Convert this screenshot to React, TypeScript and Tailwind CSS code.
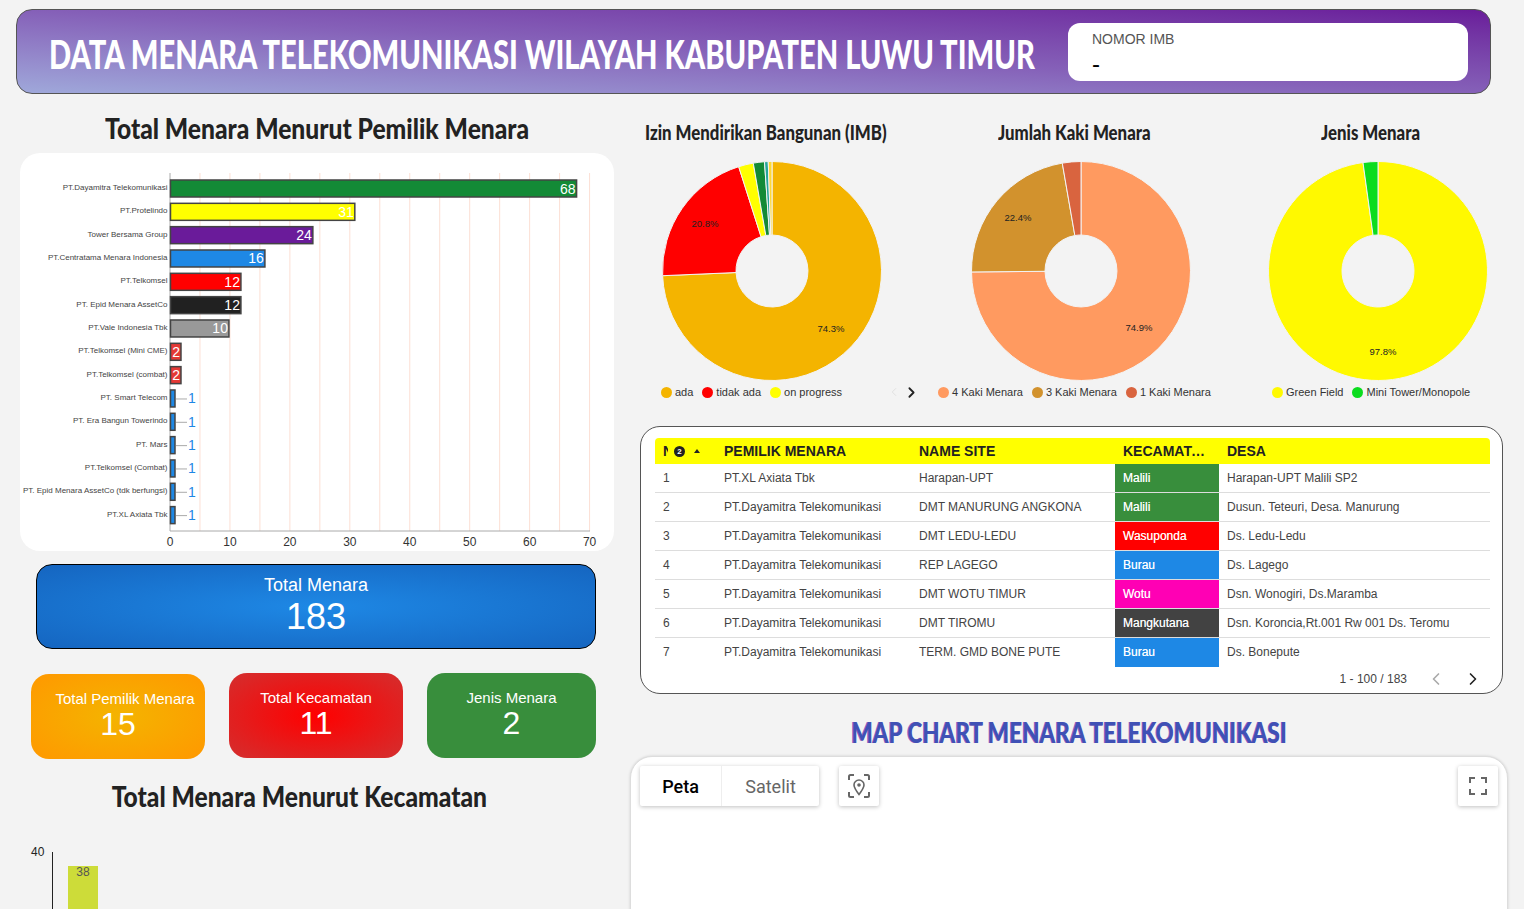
import { ChevronLeft, ChevronRight } from "lucide-react";

const heading = "font-['Lato',sans-serif] font-black text-[#222] whitespace-nowrap";

const bars = [
  { name: "PT.Dayamitra Telekomunikasi", value: 68, color: "#138a36" },
  { name: "PT.Protelindo", value: 31, color: "#ffff00" },
  { name: "Tower Bersama Group", value: 24, color: "#6a1b9a" },
  { name: "PT.Centratama Menara Indonesia", value: 16, color: "#1e88e5" },
  { name: "PT.Telkomsel", value: 12, color: "#ff0000" },
  { name: "PT. Epid Menara AssetCo", value: 12, color: "#212121" },
  { name: "PT.Vale Indonesia Tbk", value: 10, color: "#999999" },
  { name: "PT.Telkomsel (Mini CME)", value: 2, color: "#e53935" },
  { name: "PT.Telkomsel (combat)", value: 2, color: "#e53935" },
  { name: "PT. Smart Telecom", value: 1, color: "#1e88e5" },
  { name: "PT. Era Bangun Towerindo", value: 1, color: "#1e88e5" },
  { name: "PT. Mars", value: 1, color: "#1e88e5" },
  { name: "PT.Telkomsel (Combat)", value: 1, color: "#1e88e5" },
  { name: "PT. Epid Menara AssetCo (tdk berfungsi)", value: 1, color: "#1e88e5" },
  { name: "PT.XL Axiata Tbk", value: 1, color: "#1e88e5" },
];

const rows = [
  ["1", "PT.XL Axiata Tbk", "Harapan-UPT", "Malili", "Harapan-UPT Malili SP2", "bg-[#388e3c]"],
  ["2", "PT.Dayamitra Telekomunikasi", "DMT MANURUNG ANGKONA", "Malili", "Dusun. Teteuri, Desa. Manurung", "bg-[#388e3c]"],
  ["3", "PT.Dayamitra Telekomunikasi", "DMT LEDU-LEDU", "Wasuponda", "Ds. Ledu-Ledu", "bg-[#ff0000]"],
  ["4", "PT.Dayamitra Telekomunikasi", "REP LAGEGO", "Burau", "Ds. Lagego", "bg-[#1e88e5]"],
  ["5", "PT.Dayamitra Telekomunikasi", "DMT WOTU TIMUR", "Wotu", "Dsn. Wonogiri, Ds.Maramba", "bg-[#ff00b4]"],
  ["6", "PT.Dayamitra Telekomunikasi", "DMT TIROMU", "Mangkutana", "Dsn. Koroncia,Rt.001 Rw 001 Ds. Teromu", "bg-[#424242]"],
  ["7", "PT.Dayamitra Telekomunikasi", "TERM. GMD BONE PUTE", "Burau", "Ds. Bonepute", "bg-[#1e88e5]"],
];

const BarChart = () => (
  <svg width="594" height="398" className="block">
    {Array.from({ length: 14 }, (_, i) => (
      <line key={i} x1={150 + (i + 1) * 29.97} x2={150 + (i + 1) * 29.97} y1="20" y2="378" stroke="#fcdfd4" />
    ))}
    <line x1="150" x2="150" y1="20" y2="378" stroke="#aaa" />
    <line x1="150" x2="570" y1="378" y2="378" stroke="#aaa" />
    {[0, 10, 20, 30, 40, 50, 60, 70].map((t) => (
      <text key={t} x={150 + t * 5.994} y="393" textAnchor="middle" fontSize="12" fill="#333">
        {t}
      </text>
    ))}
    {bars.map((b, i) => {
      const y = 35 + i * 23.33;
      const w = b.value * 5.994;
      return (
        <g key={b.name}>
          <text x="147.500" y={y + 2} textAnchor="end" fontSize="8" fill="#444">
            {b.name}
          </text>
          <rect x="150.500" y={y - 8} width={w - 1.5} height="17" fill={b.color} stroke="#444" strokeWidth="1.500" />
          {b.value > 1 ? (
            <text x={150 + w - 2} y={y + 5.5} textAnchor="end" fontSize="14" fill="#fff">
              {b.value}
            </text>
          ) : (
            <>
              <line x1={150 + w} x2="167" y1={y + 1} y2={y + 1} stroke="#aaa" />
              <text x="168" y={y + 5.5} fontSize="14" fill="#1e88e5">
                {b.value}
              </text>
            </>
          )}
        </g>
      );
    })}
  </svg>
);

const Donut = ({
  slices,
  labels,
}: {
  slices: { value: number; color: string }[];
  labels: { x: number; y: number; text: string }[];
}) => {
  const total = slices.reduce((s, x) => s + x.value, 0);
  let angle = 0;
  const pt = (r: number, a: number) => [110 + r * Math.sin(a), 110 - r * Math.cos(a)];
  return (
    <svg width="220" height="220" className="block">
      {slices.map((s, i) => {
        const a0 = angle;
        const a1 = angle + (s.value / total) * Math.PI * 2;
        angle = a1;
        const large = a1 - a0 > Math.PI ? 1 : 0;
        const [x0, y0] = pt(109.5, a0);
        const [x1, y1] = pt(109.5, a1);
        const [x2, y2] = pt(36, a1);
        const [x3, y3] = pt(36, a0);
        return (
          <path
            key={i}
            d={`M${x0} ${y0}A109.5 109.5 0 ${large} 1 ${x1} ${y1}L${x2} ${y2}A36 36 0 ${large} 0 ${x3} ${y3}Z`}
            fill={s.color}
            stroke="#f3f3f3"
            strokeWidth="1"
          />
        );
      })}
      {labels.map((l) => (
        <text key={l.text} x={l.x} y={l.y} textAnchor="middle" fontSize="9.5" fill="#222">
          {l.text}
        </text>
      ))}
    </svg>
  );
};

const Legend = ({ items }: { items: { label: string; dot: string }[] }) => (
  <div className="flex items-center gap-[9px] h-[14px] text-[11px] text-[#333]">
    {items.map((it) => (
      <div key={it.label} className="flex items-center gap-[3px] whitespace-nowrap">
        <span className={`w-[11px] h-[11px] rounded-full ${it.dot}`} />
        {it.label}
      </div>
    ))}
  </div>
);

const PieTitle = ({ children, className }: { children: string; className: string }) => (
  <div className={`h-[24px] flex items-center ${className}`}>
    <span className={`${heading} inline-block origin-left scale-x-[0.84] text-[20px] leading-[24px]`}>{children}</span>
  </div>
);

const StatCard = ({
  title,
  value,
  className,
  titleClass,
}: {
  title: string;
  value: string;
  className: string;
  titleClass?: string;
}) => (
  <div className={`h-[85px] rounded-[18px] flex flex-col items-center pt-[16px] text-white ${className}`}>
    <div className={`text-[15px] leading-[18px] whitespace-nowrap ${titleClass ?? ""}`}>{title}</div>
    <div className="text-[32px] leading-[32px]">{value}</div>
  </div>
);

const LocateIcon = () => (
  <svg width="24" height="26" viewBox="0 0 24 26" fill="none" stroke="#666" strokeWidth="2">
    <path d="M2 7V3.500A1.500 1.500 0 0 1 3.500 2H7M17 2h3.500A1.500 1.500 0 0 1 22 3.500V7M2 19v3.500A1.500 1.500 0 0 0 3.500 24H7M17 24h3.500a1.500 1.500 0 0 0 1.500-1.500V19" />
    <path strokeWidth="1.6" d="M12 21.500c-3-4-5-6.800-5-9.500a5 5 0 0 1 10 0c0 2.700-2 5.500-5 9.500Z" />
    <circle cx="12" cy="12" r="1.800" fill="#666" stroke="none" />
  </svg>
);

const FullscreenIcon = () => (
  <svg width="18" height="18" viewBox="0 0 18 18" fill="none" stroke="#666" strokeWidth="2">
    <path d="M1 6V1h5M12 1h5v5M1 12v5h5M17 12v5h-5" />
  </svg>
);

const App = () => {
  return (
    <div className="h-[909px] overflow-hidden bg-[#f3f3f3] pl-[16px] pt-[9px] font-['Liberation_Sans',Arial,sans-serif]">
      {/* Header */}
      <div className="w-[1475px] h-[85px] rounded-[16px] border border-[#555] bg-gradient-to-tr from-[#9fa8da] via-[#8560b8] to-[#6a1b9a] flex items-center pl-[32px]">
        <div className="w-[1019px] pt-[5px]">
          <h1 className="font-['Lato',sans-serif] font-black text-white text-[40px] leading-[44px] whitespace-nowrap inline-block origin-left scale-x-[0.728]">
            DATA MENARA TELEKOMUNIKASI WILAYAH KABUPATEN LUWU TIMUR
          </h1>
        </div>
        <div className="w-[400px] h-[58px] bg-white rounded-[12px] pl-[24px] pt-[8px] shrink-0">
          <div className="text-[14px] leading-[16px] text-[#555]">NOMOR IMB</div>
          <div className="text-[24px] leading-[26px] mt-[4px] text-black">-</div>
        </div>
      </div>

      <div className="flex">
        {/* Left column */}
        <div className="w-[614px] shrink-0">
          <div className="w-[602px] h-[32px] mt-[18px] flex justify-center">
            <h2 className={`${heading} text-[29px] leading-[32px] scale-x-[0.848]`}>Total Menara Menurut Pemilik Menara</h2>
          </div>
          <div className="ml-[4px] mt-[9px] w-[594px] h-[398px] bg-white rounded-[20px] overflow-hidden">
            <BarChart />
          </div>
          <div className="ml-[20px] mt-[13px] w-[560px] h-[85px] rounded-[16px] border border-black bg-[radial-gradient(ellipse_at_center,#1e88e5,#1565c0)] flex flex-col items-center pt-[9px] text-white">
            <div className="text-[18px] leading-[22px]">Total Menara</div>
            <div className="text-[36px] leading-[40px] mt-[1px]">183</div>
          </div>
          <div className="ml-[15px] mt-[24px] flex gap-[24px]">
            <StatCard
              title="Total Pemilik Menara"
              value="15"
              titleClass="ml-[14px]"
              className="w-[174px] mt-[1px] bg-[radial-gradient(ellipse_at_center,#f4b400,#ff9800)]"
            />
            <StatCard
              title="Total Kecamatan"
              value="11"
              className="w-[174px] bg-[radial-gradient(ellipse_at_center,#ff0000,#d32f2f)]"
            />
            <StatCard title="Jenis Menara" value="2" className="w-[169px] bg-[#388e3c]" />
          </div>
          <div className="w-[566px] h-[32px] mt-[21px] flex justify-center">
            <h2 className={`${heading} text-[29px] leading-[32px] scale-x-[0.848]`}>Total Menara Menurut Kecamatan</h2>
          </div>
          <svg width="120" height="96" className="block mt-[1px]">
            <text x="15" y="43" fontSize="12" fill="#222">
              40
            </text>
            <line x1="36.500" x2="36.500" y1="39" y2="96" stroke="#222" />
            <rect x="52" y="53" width="30" height="43" fill="#cddc39" />
            <text x="67" y="63" textAnchor="middle" fontSize="12" fill="#555">
              38
            </text>
          </svg>
        </div>

        {/* Right column */}
        <div className="w-[894px] shrink-0">
          <div className="flex ml-[10px] mt-[26px]">
            <div className="w-[298px]">
              <PieTitle className="pl-[5px]">Izin Mendirikan Bangunan (IMB)</PieTitle>
              <div className="ml-[22px] mt-[17px]">
                <Donut
                  slices={[
                    { value: 136, color: "#f4b400" },
                    { value: 38, color: "#ff0000" },
                    { value: 4, color: "#ffff00" },
                    { value: 3, color: "#138a36" },
                    { value: 1, color: "#26a69a" },
                    { value: 1, color: "#fdd835" },
                  ]}
                  labels={[
                    { x: 169, y: 171, text: "74.3%" },
                    { x: 43, y: 66, text: "20.8%" },
                  ]}
                />
              </div>
              <div className="flex items-center h-[14px] mt-[4px] ml-[21px]">
                <Legend
                  items={[
                    { label: "ada", dot: "bg-[#f4b400]" },
                    { label: "tidak ada", dot: "bg-[#ff0000]" },
                    { label: "on progress", dot: "bg-[#ffff00]" },
                  ]}
                />
                <ChevronLeft size={14} strokeWidth={1.5} className="ml-[45px] text-[#ddd]" />
                <ChevronRight size={17} strokeWidth={2.5} className="ml-[2px] text-[#222]" />
              </div>
            </div>
            <div className="w-[330px]">
              <PieTitle className="pl-[60px]">Jumlah Kaki Menara</PieTitle>
              <div className="ml-[33px] mt-[17px]">
                <Donut
                  slices={[
                    { value: 137, color: "#ff9a60" },
                    { value: 41, color: "#d2922d" },
                    { value: 5, color: "#d9643f" },
                  ]}
                  labels={[
                    { x: 168, y: 170, text: "74.9%" },
                    { x: 47, y: 60, text: "22.4%" },
                  ]}
                />
              </div>
              <div className="mt-[4px]">
                <Legend
                  items={[
                    { label: "4 Kaki Menara", dot: "bg-[#ff9a60]" },
                    { label: "3 Kaki Menara", dot: "bg-[#d2922d]" },
                    { label: "1 Kaki Menara", dot: "bg-[#d9643f]" },
                  ]}
                />
              </div>
            </div>
            <div className="w-[256px]">
              <PieTitle className="pl-[53px]">Jenis Menara</PieTitle>
              <div className="mt-[17px]">
                <Donut
                  slices={[
                    { value: 179, color: "#fff900" },
                    { value: 4, color: "#0bdc1e" },
                  ]}
                  labels={[{ x: 115, y: 194, text: "97.8%" }]}
                />
              </div>
              <div className="mt-[4px] ml-[4px]">
                <Legend
                  items={[
                    { label: "Green Field", dot: "bg-[#fff900]" },
                    { label: "Mini Tower/Monopole", dot: "bg-[#0bdc1e]" },
                  ]}
                />
              </div>
            </div>
          </div>

          {/* Table */}
          <div className="ml-[10px] mt-[27px] w-[863px] h-[268px] bg-white rounded-[20px] border border-[#555] pl-[14px] pt-[11px]">
            <table className="w-[835px] table-fixed border-separate border-spacing-0 text-[12px] text-[#444]">
              <colgroup>
                <col className="w-[61px]" />
                <col className="w-[195px]" />
                <col className="w-[204px]" />
                <col className="w-[104px]" />
                <col />
              </colgroup>
              <thead>
                <tr className="bg-[#ffff00] text-[14px] text-[#222] text-left">
                  <th className="h-[26px] pl-[8px] rounded-tl-[4px] font-bold">
                    <div className="flex items-center">
                      <span className="w-[5px] overflow-hidden">N</span>
                      <span className="ml-[6px] w-[11px] h-[11px] rounded-full bg-[#222] text-white text-[8px] leading-[11px] text-center">
                        2
                      </span>
                      <span className="ml-[9px] w-0 h-0 border-x-[3px] border-x-transparent border-b-[4px] border-b-[#222]" />
                    </div>
                  </th>
                  <th className="pl-[8px] font-bold">PEMILIK MENARA</th>
                  <th className="pl-[8px] font-bold">NAME SITE</th>
                  <th className="pl-[8px] pr-[12px] font-bold truncate">KECAMATAN</th>
                  <th className="pl-[8px] rounded-tr-[4px] font-bold">DESA</th>
                </tr>
              </thead>
              <tbody>
                {rows.map((r, i) => {
                  const line = i < 6 ? "border-[#ddd]" : "border-transparent";
                  return (
                    <tr key={r[0]}>
                      <td className={`h-[29px] pl-[8px] border-b ${line}`}>{r[0]}</td>
                      <td className={`pl-[8px] border-b ${line}`}>{r[1]}</td>
                      <td className={`pl-[8px] border-b ${line}`}>{r[2]}</td>
                      <td className={`pl-[8px] border-b ${line} text-white/90 [text-shadow:0_0_0.6px_currentColor] ${r[5]}`}>{r[3]}</td>
                      <td className={`pl-[8px] border-b ${line}`}>{r[4]}</td>
                    </tr>
                  );
                })}
              </tbody>
            </table>
            <div className="w-[835px] h-[24px] flex items-center justify-end text-[12px] text-[#444]">
              <span>1 - 100 / 183</span>
              <ChevronLeft size={20} strokeWidth={2} className="ml-[19px] text-[#aaa]" />
              <ChevronRight size={20} strokeWidth={2} className="ml-[17px] mr-[7px] text-[#222]" />
            </div>
          </div>

          {/* Map */}
          <div className="w-[878px] h-[28px] mt-[24px] flex justify-center">
            <h2 className="font-['Lato',sans-serif] font-black text-[#3f51b5] text-[28px] leading-[28px] whitespace-nowrap inline-block scale-x-[0.803] [text-shadow:-1px_0_0_#9c5fc0]">
              MAP CHART MENARA TELEKOMUNIKASI
            </h2>
          </div>
          <div className="mt-[10px] w-[878px] h-[300px] bg-white rounded-[22px] border border-[#ddd] shadow-[0_0_3px_rgba(0,0,0,0.15)] px-[9px] pt-[9px] flex items-start font-['Roboto',sans-serif]">
            <div className="flex h-[40px] bg-white rounded-[2px] shadow-[0_1px_4px_rgba(0,0,0,0.25)] text-[18px]">
              <div className="w-[82px] flex items-center justify-center text-black font-medium border-r border-[#eee]">Peta</div>
              <div className="w-[97px] flex items-center justify-center text-[#666]">Satelit</div>
            </div>
            <div className="ml-[20px] w-[40px] h-[40px] flex items-center justify-center bg-white rounded-[2px] shadow-[0_1px_4px_rgba(0,0,0,0.25)]">
              <LocateIcon />
            </div>
            <div className="ml-auto w-[40px] h-[40px] flex items-center justify-center bg-white rounded-[2px] shadow-[0_1px_4px_rgba(0,0,0,0.25)]">
              <FullscreenIcon />
            </div>
          </div>
        </div>
      </div>
    </div>
  );
};

export default App;
